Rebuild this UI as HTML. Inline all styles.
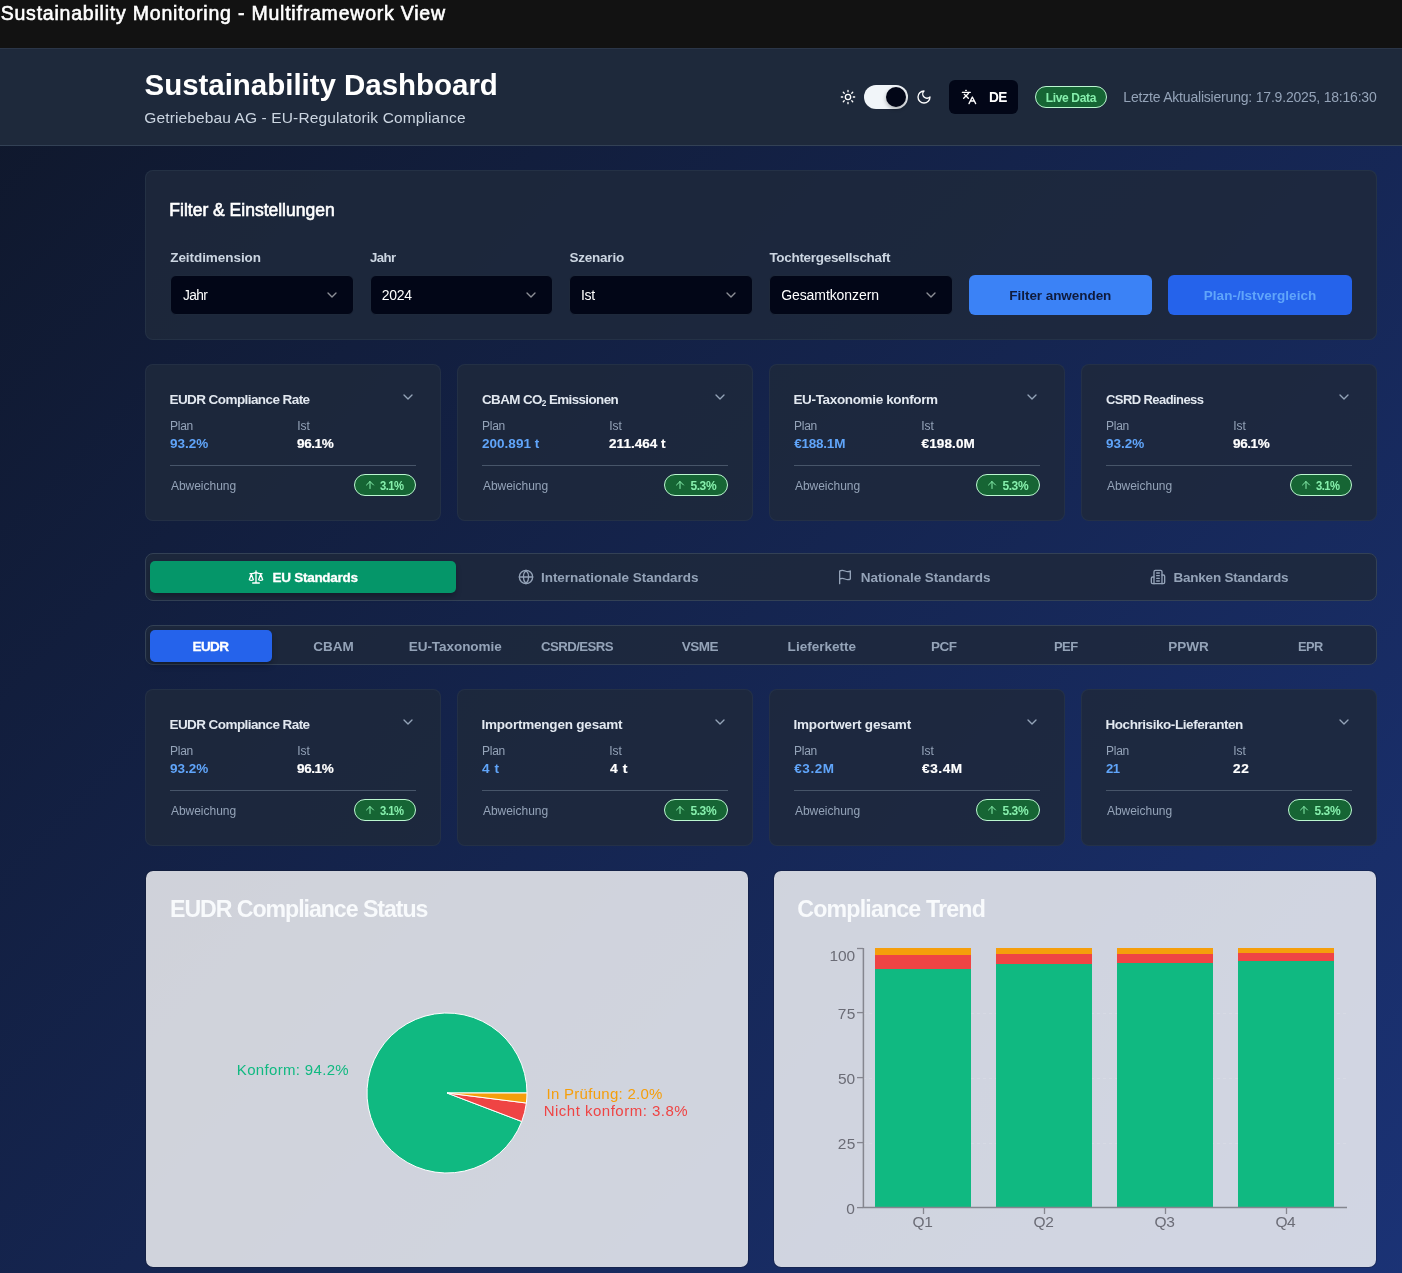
<!DOCTYPE html>
<html lang="de">
<head>
<meta charset="utf-8">
<title>Sustainability Monitoring - Multiframework View</title>
<style>
*{box-sizing:border-box;margin:0;padding:0}
html,body{width:1402px;height:1273px;overflow:hidden}
body{position:relative;font-family:"Liberation Sans",sans-serif;background:#111;color:#fff;-webkit-font-smoothing:antialiased}
.abs{position:absolute}
#txt{position:absolute;left:0;top:0;width:1402px;height:1273px;will-change:transform}
.t{position:absolute;white-space:nowrap;line-height:normal;transform-origin:0 0}
#bg{left:0;top:48px;width:1402px;height:1225px;background:linear-gradient(134deg,#0f172a -0.9%,#1e3a8a 128.1%)}
#topbar{left:0;top:0;width:1402px;height:48px;background:#121212}
#header{left:0;top:48px;width:1402px;height:98px;background:#1e293b;border-top:1px solid #2b3648;border-bottom:1px solid #334155}
.panel{position:absolute;background:rgba(30,41,59,.86);border:1px solid rgba(51,65,85,.4);border-radius:8px}
.sel{position:absolute;background:#020617;border:1px solid #1e293b;border-radius:6px;height:40px;top:275px;width:184px}
.btn{position:absolute;height:40px;top:275px;width:183px;border-radius:6px}
.kpi{position:absolute;width:296px;height:157px;background:rgba(30,41,59,.86);border:1px solid rgba(51,65,85,.35);border-radius:8px}
.badge{position:absolute;height:22px;border-radius:11px;background:#166534;border:1px solid #bbf7d0}
.hr{position:absolute;height:1px;background:#475569}
.chart{position:absolute;width:604px;height:398px;top:870px;background:rgba(255,255,255,.8);background-clip:padding-box;border:1px solid rgba(15,23,42,.3);border-radius:8px}
svg{position:absolute;overflow:visible}
.ic{fill:none;stroke-width:2;stroke-linecap:round;stroke-linejoin:round}
</style>
</head>
<body>
<div id="topbar" class="abs"></div>
<div id="bg" class="abs"></div>
<div id="header" class="abs"></div>
<svg class="ic" viewBox="0 0 24 24" width="16" height="16" style="left:840px;top:89px;stroke:#fff;stroke-width:2"><circle cx="12" cy="12" r="4"/><path d="M12 2v2M12 20v2M4.93 4.93l1.41 1.41M17.66 17.66l1.41 1.41M2 12h2M20 12h2M6.34 17.66l-1.41 1.41M19.07 4.93l-1.41 1.41"/></svg>
<div class="abs" style="left:864px;top:85px;width:44px;height:24px;border-radius:12px;background:#f1f5f9"></div>
<div class="abs" style="left:886px;top:87px;width:20px;height:20px;border-radius:10px;background:#020617;box-shadow:0 2px 4px rgba(0,0,0,.3)"></div>
<svg class="ic" viewBox="0 0 24 24" width="16" height="16" style="left:916px;top:89px;stroke:#fff;stroke-width:2"><path d="M12 3a6 6 0 0 0 9 9 9 9 0 1 1-9-9Z"/></svg>
<div class="abs" style="left:949px;top:80px;width:69px;height:34px;border-radius:6px;background:#020617"></div>
<svg class="ic" viewBox="0 0 24 24" width="16" height="16" style="left:961px;top:89px;stroke:#fff;stroke-width:2"><path d="m5 8 6 6M4 14l6-6 2-3M2 5h12M7 2h1M22 22l-5-10-5 10M14 18h6"/></svg>
<div class="badge" style="left:1035px;top:86px;width:72px"></div>
<div class="panel" style="left:145px;top:170px;width:1232px;height:170px"></div>
<div class="sel" style="left:170.00px;width:183.67px"></div>
<svg class="ic" viewBox="0 0 24 24" width="16" height="16" style="left:323.67px;top:287px;stroke:#fff;stroke-width:2;opacity:0.55"><path d="m6 9 6 6 6-6"/></svg>
<div class="sel" style="left:369.67px;width:183.67px"></div>
<svg class="ic" viewBox="0 0 24 24" width="16" height="16" style="left:523.34px;top:287px;stroke:#fff;stroke-width:2;opacity:0.55"><path d="m6 9 6 6 6-6"/></svg>
<div class="sel" style="left:569.33px;width:183.67px"></div>
<svg class="ic" viewBox="0 0 24 24" width="16" height="16" style="left:723.0px;top:287px;stroke:#fff;stroke-width:2;opacity:0.55"><path d="m6 9 6 6 6-6"/></svg>
<div class="sel" style="left:769.00px;width:183.67px"></div>
<svg class="ic" viewBox="0 0 24 24" width="16" height="16" style="left:922.67px;top:287px;stroke:#fff;stroke-width:2;opacity:0.55"><path d="m6 9 6 6 6-6"/></svg>
<div class="btn" style="left:969px;background:#3b82f6"></div>
<div class="btn" style="left:1168px;width:184px;background:#2563eb"></div>
<div class="kpi" style="left:145px;top:364px"></div>
<svg class="ic" viewBox="0 0 24 24" width="16" height="16" style="left:400px;top:388.5px;stroke:#94a3b8;stroke-width:2"><path d="m6 9 6 6 6-6"/></svg>
<div class="hr" style="left:170px;top:465px;width:246px"></div>
<div class="badge" style="left:354px;top:474px;width:62px"></div>
<svg class="ic" viewBox="0 0 24 24" width="12" height="12" style="left:364px;top:479px;stroke:#86efac;stroke-width:2"><path d="m5 12 7-7 7 7M12 19V5"/></svg>
<div class="kpi" style="left:457px;top:364px"></div>
<svg class="ic" viewBox="0 0 24 24" width="16" height="16" style="left:712px;top:388.5px;stroke:#94a3b8;stroke-width:2"><path d="m6 9 6 6 6-6"/></svg>
<div class="hr" style="left:482px;top:465px;width:246px"></div>
<div class="badge" style="left:664px;top:474px;width:64px"></div>
<svg class="ic" viewBox="0 0 24 24" width="12" height="12" style="left:674px;top:479px;stroke:#86efac;stroke-width:2"><path d="m5 12 7-7 7 7M12 19V5"/></svg>
<div class="kpi" style="left:769px;top:364px"></div>
<svg class="ic" viewBox="0 0 24 24" width="16" height="16" style="left:1024px;top:388.5px;stroke:#94a3b8;stroke-width:2"><path d="m6 9 6 6 6-6"/></svg>
<div class="hr" style="left:794px;top:465px;width:246px"></div>
<div class="badge" style="left:976px;top:474px;width:64px"></div>
<svg class="ic" viewBox="0 0 24 24" width="12" height="12" style="left:986px;top:479px;stroke:#86efac;stroke-width:2"><path d="m5 12 7-7 7 7M12 19V5"/></svg>
<div class="kpi" style="left:1081px;top:364px"></div>
<svg class="ic" viewBox="0 0 24 24" width="16" height="16" style="left:1336px;top:388.5px;stroke:#94a3b8;stroke-width:2"><path d="m6 9 6 6 6-6"/></svg>
<div class="hr" style="left:1106px;top:465px;width:246px"></div>
<div class="badge" style="left:1290px;top:474px;width:62px"></div>
<svg class="ic" viewBox="0 0 24 24" width="12" height="12" style="left:1300px;top:479px;stroke:#86efac;stroke-width:2"><path d="m5 12 7-7 7 7M12 19V5"/></svg>
<div class="kpi" style="left:145px;top:689px"></div>
<svg class="ic" viewBox="0 0 24 24" width="16" height="16" style="left:400px;top:713.5px;stroke:#94a3b8;stroke-width:2"><path d="m6 9 6 6 6-6"/></svg>
<div class="hr" style="left:170px;top:790px;width:246px"></div>
<div class="badge" style="left:354px;top:799px;width:62px"></div>
<svg class="ic" viewBox="0 0 24 24" width="12" height="12" style="left:364px;top:804px;stroke:#86efac;stroke-width:2"><path d="m5 12 7-7 7 7M12 19V5"/></svg>
<div class="kpi" style="left:457px;top:689px"></div>
<svg class="ic" viewBox="0 0 24 24" width="16" height="16" style="left:712px;top:713.5px;stroke:#94a3b8;stroke-width:2"><path d="m6 9 6 6 6-6"/></svg>
<div class="hr" style="left:482px;top:790px;width:246px"></div>
<div class="badge" style="left:664px;top:799px;width:64px"></div>
<svg class="ic" viewBox="0 0 24 24" width="12" height="12" style="left:674px;top:804px;stroke:#86efac;stroke-width:2"><path d="m5 12 7-7 7 7M12 19V5"/></svg>
<div class="kpi" style="left:769px;top:689px"></div>
<svg class="ic" viewBox="0 0 24 24" width="16" height="16" style="left:1024px;top:713.5px;stroke:#94a3b8;stroke-width:2"><path d="m6 9 6 6 6-6"/></svg>
<div class="hr" style="left:794px;top:790px;width:246px"></div>
<div class="badge" style="left:976px;top:799px;width:64px"></div>
<svg class="ic" viewBox="0 0 24 24" width="12" height="12" style="left:986px;top:804px;stroke:#86efac;stroke-width:2"><path d="m5 12 7-7 7 7M12 19V5"/></svg>
<div class="kpi" style="left:1081px;top:689px"></div>
<svg class="ic" viewBox="0 0 24 24" width="16" height="16" style="left:1336px;top:713.5px;stroke:#94a3b8;stroke-width:2"><path d="m6 9 6 6 6-6"/></svg>
<div class="hr" style="left:1106px;top:790px;width:246px"></div>
<div class="badge" style="left:1288px;top:799px;width:64px"></div>
<svg class="ic" viewBox="0 0 24 24" width="12" height="12" style="left:1298px;top:804px;stroke:#86efac;stroke-width:2"><path d="m5 12 7-7 7 7M12 19V5"/></svg>
<div class="panel" style="left:145px;top:553px;width:1232px;height:48px;border-color:#334155"></div>
<div class="abs" style="left:150px;top:561px;width:306px;height:32px;border-radius:5px;background:#059669;box-shadow:0 4px 6px -1px rgba(0,0,0,.3)"></div>
<svg class="ic" viewBox="0 0 24 24" width="16" height="16" style="left:248px;top:569px;stroke:#fff;stroke-width:2"><path d="m16 16 3-8 3 8c-.87.65-1.92 1-3 1s-2.13-.35-3-1Z"/><path d="m2 16 3-8 3 8c-.87.65-1.92 1-3 1s-2.13-.35-3-1Z"/><path d="M7 21h10M12 3v18M3 7h2c2 0 5-1 7-2 2 1 5 2 7 2h2"/></svg>
<svg class="ic" viewBox="0 0 24 24" width="16" height="16" style="left:518px;top:569px;stroke:#94a3b8;stroke-width:2"><circle cx="12" cy="12" r="10"/><path d="M12 2a14.5 14.5 0 0 0 0 20 14.5 14.5 0 0 0 0-20M2 12h20"/></svg>
<svg class="ic" viewBox="0 0 24 24" width="16" height="16" style="left:837px;top:569px;stroke:#94a3b8;stroke-width:2"><path d="M4 15s1-1 4-1 5 2 8 2 4-1 4-1V3s-1 1-4 1-5-2-8-2-4 1-4 1zM4 22v-7"/></svg>
<svg class="ic" viewBox="0 0 24 24" width="16" height="16" style="left:1150px;top:569px;stroke:#94a3b8;stroke-width:2"><path d="M6 22V4a2 2 0 0 1 2-2h8a2 2 0 0 1 2 2v18Z"/><path d="M6 12H4a2 2 0 0 0-2 2v6a2 2 0 0 0 2 2h2M18 9h2a2 2 0 0 1 2 2v9a2 2 0 0 1-2 2h-2M10 6h4M10 10h4M10 14h4M10 18h4"/></svg>
<div class="panel" style="left:145px;top:625px;width:1232px;height:40px;border-color:#334155"></div>
<div class="abs" style="left:150px;top:630px;width:122.2px;height:32px;border-radius:5px;background:#2563eb;box-shadow:0 4px 6px -1px rgba(0,0,0,.3)"></div>
<div class="chart" style="left:145px"></div>
<div class="chart" style="left:773px"></div>
<svg width="1402" height="1273" style="left:0;top:0" viewBox="0 0 1402 1273"><path d="M447,1093L527.00,1093.00A80,80 0 1 0 521.75,1121.51Z" fill="#10b981" stroke="#fff" stroke-width="1"/><path d="M447,1093L521.75,1121.51A80,80 0 0 0 526.37,1103.03Z" fill="#ef4444" stroke="#fff" stroke-width="1"/><path d="M447,1093L526.37,1103.03A80,80 0 0 0 527.00,1093.00Z" fill="#f59e0b" stroke="#fff" stroke-width="1"/></svg>
<svg width="1402" height="1273" style="left:0;top:0" viewBox="0 0 1402 1273" shape-rendering="crispEdges"><line x1="863" x2="1347" y1="1143.0" y2="1143.0" stroke="rgba(255,255,255,.13)" stroke-dasharray="3 3"/><line x1="863" x2="1347" y1="1078.0" y2="1078.0" stroke="rgba(255,255,255,.13)" stroke-dasharray="3 3"/><line x1="863" x2="1347" y1="1013.0" y2="1013.0" stroke="rgba(255,255,255,.13)" stroke-dasharray="3 3"/><rect x="875.0" y="968.5" width="96" height="239.5" fill="#10b981"/><rect x="875.0" y="955.0" width="96" height="13.5" fill="#ef4444"/><rect x="875.0" y="948" width="96" height="7.0" fill="#f59e0b"/><rect x="996.0" y="964.1" width="96" height="243.9" fill="#10b981"/><rect x="996.0" y="954.0" width="96" height="10.1" fill="#ef4444"/><rect x="996.0" y="948" width="96" height="6.0" fill="#f59e0b"/><rect x="1117.0" y="963.1" width="96" height="244.9" fill="#10b981"/><rect x="1117.0" y="954.0" width="96" height="9.1" fill="#ef4444"/><rect x="1117.0" y="948" width="96" height="6.0" fill="#f59e0b"/><rect x="1238.0" y="960.7" width="96" height="247.3" fill="#10b981"/><rect x="1238.0" y="952.9" width="96" height="7.8" fill="#ef4444"/><rect x="1238.0" y="948" width="96" height="4.9" fill="#f59e0b"/></svg>
<svg width="1402" height="1273" style="left:0;top:0" viewBox="0 0 1402 1273"><line x1="863.4" x2="863.4" y1="948" y2="1208" stroke="#85868f" stroke-width="1.5"/><line x1="862.7" x2="1347" y1="1207.6" y2="1207.6" stroke="#85868f" stroke-width="1.5"/><line x1="857" x2="863" y1="1207.6" y2="1207.6" stroke="#85868f" stroke-width="1.3"/><line x1="857" x2="863" y1="1142.6" y2="1142.6" stroke="#85868f" stroke-width="1.3"/><line x1="857" x2="863" y1="1077.6" y2="1077.6" stroke="#85868f" stroke-width="1.3"/><line x1="857" x2="863" y1="1012.6" y2="1012.6" stroke="#85868f" stroke-width="1.3"/><line x1="857" x2="863" y1="948.5" y2="948.5" stroke="#85868f" stroke-width="1.3"/><line x1="923.5" x2="923.5" y1="1208" y2="1214" stroke="#85868f" stroke-width="1.3"/><line x1="1044.5" x2="1044.5" y1="1208" y2="1214" stroke="#85868f" stroke-width="1.3"/><line x1="1165.5" x2="1165.5" y1="1208" y2="1214" stroke="#85868f" stroke-width="1.3"/><line x1="1286.5" x2="1286.5" y1="1208" y2="1214" stroke="#85868f" stroke-width="1.3"/></svg>
<div id="txt">
<div class="t" id="t0" style="top:2px;font-size:19.5px;color:#fff;-webkit-text-stroke:0.6px #fff;letter-spacing:0.786px;left:0.69px;">Sustainability Monitoring - Multiframework View</div>
<div class="t" id="t1" style="top:68px;font-size:29.5px;color:#fff;font-weight:700;letter-spacing:-0.032px;left:144.54px;">Sustainability Dashboard</div>
<div class="t" id="t2" style="top:109px;font-size:15.5px;color:#cbd5e1;letter-spacing:0.126px;left:144.27px;">Getriebebau AG - EU-Regulatorik Compliance</div>
<div class="t" id="t3" style="top:89px;font-size:14px;color:#fff;font-weight:700;letter-spacing:-0.630px;transform:scaleX(0.9728);left:988.55px;">DE</div>
<div class="t" id="t4" style="top:91px;font-size:12px;color:#86efac;font-weight:700;letter-spacing:-0.336px;left:1045.65px;">Live Data</div>
<div class="t" id="t5" style="top:89px;font-size:14px;color:#94a3b8;letter-spacing:-0.197px;left:1123.31px;">Letzte Aktualisierung: 17.9.2025, 18:16:30</div>
<div class="t" id="t6" style="top:200px;font-size:17.5px;color:#fff;-webkit-text-stroke:0.6px #fff;letter-spacing:-0.001px;left:169.33px;">Filter &amp; Einstellungen</div>
<div class="t" id="t7" style="top:250px;font-size:13.5px;color:#cbd5e1;font-weight:700;letter-spacing:-0.054px;left:170.19px;">Zeitdimension</div>
<div class="t" id="t8" style="top:287px;font-size:14px;color:#fff;letter-spacing:-0.630px;transform:scaleX(0.9818);left:182.59px;">Jahr</div>
<div class="t" id="t9" style="top:250px;font-size:13.5px;color:#cbd5e1;font-weight:700;letter-spacing:-0.607px;transform:scaleX(0.9805);left:370.07px;">Jahr</div>
<div class="t" id="t10" style="top:287px;font-size:14px;color:#fff;letter-spacing:-0.284px;left:381.81px;">2024</div>
<div class="t" id="t11" style="top:250px;font-size:13.5px;color:#cbd5e1;font-weight:700;letter-spacing:-0.233px;left:569.52px;">Szenario</div>
<div class="t" id="t12" style="top:287px;font-size:14px;color:#fff;letter-spacing:-0.368px;left:581.04px;">Ist</div>
<div class="t" id="t13" style="top:250px;font-size:13.5px;color:#cbd5e1;font-weight:700;letter-spacing:-0.304px;left:769.40px;">Tochtergesellschaft</div>
<div class="t" id="t14" style="top:287px;font-size:14px;color:#fff;letter-spacing:-0.074px;left:781.14px;">Gesamtkonzern</div>
<div class="t" id="t15" style="top:288px;font-size:13.5px;color:#0f1b3d;font-weight:700;letter-spacing:-0.056px;left:1009.36px;">Filter anwenden</div>
<div class="t" id="t16" style="top:288px;font-size:13.5px;color:#60a5fa;font-weight:700;letter-spacing:0.041px;left:1203.76px;">Plan-/Istvergleich</div>
<div class="t" id="t17" style="top:392px;font-size:13.5px;color:#e2e8f0;font-weight:700;letter-spacing:-0.572px;left:169.46px;">EUDR Compliance Rate</div>
<div class="t" id="t18" style="top:419px;font-size:12px;color:#94a3b8;letter-spacing:-0.273px;left:170.06px;">Plan</div>
<div class="t" id="t19" style="top:419px;font-size:12px;color:#94a3b8;letter-spacing:0.012px;left:297.16px;">Ist</div>
<div class="t" id="t20" style="top:436px;font-size:13.5px;color:#60a5fa;font-weight:700;letter-spacing:0.033px;left:169.88px;">93.2%</div>
<div class="t" id="t21" style="top:436px;font-size:13.5px;color:#fff;font-weight:700;-webkit-text-stroke:0.2px #fff;letter-spacing:-0.417px;left:297.08px;">96.1%</div>
<div class="t" id="t22" style="top:479px;font-size:12px;color:#94a3b8;letter-spacing:-0.013px;left:170.90px;">Abweichung</div>
<div class="t" id="t23" style="top:479px;font-size:12px;color:#86efac;font-weight:700;letter-spacing:-0.540px;transform:scaleX(0.9377);left:380.42px;">3.1%</div>
<div class="t" id="t24" style="top:392px;font-size:13.5px;color:#e2e8f0;font-weight:700;letter-spacing:-0.607px;transform:scaleX(0.9921);left:481.88px;">CBAM CO<span style="font-size:.62em;position:relative;top:.28em">2</span> Emissionen</div>
<div class="t" id="t25" style="top:419px;font-size:12px;color:#94a3b8;letter-spacing:-0.273px;left:482.06px;">Plan</div>
<div class="t" id="t26" style="top:419px;font-size:12px;color:#94a3b8;letter-spacing:0.012px;left:609.16px;">Ist</div>
<div class="t" id="t27" style="top:436px;font-size:13.5px;color:#60a5fa;font-weight:700;letter-spacing:0.055px;left:481.88px;">200.891 t</div>
<div class="t" id="t28" style="top:436px;font-size:13.5px;color:#fff;font-weight:700;-webkit-text-stroke:0.2px #fff;letter-spacing:0.022px;left:609.08px;">211.464 t</div>
<div class="t" id="t29" style="top:479px;font-size:12px;color:#94a3b8;letter-spacing:-0.013px;left:482.90px;">Abweichung</div>
<div class="t" id="t30" style="top:479px;font-size:12px;color:#86efac;font-weight:700;letter-spacing:-0.401px;left:690.41px;">5.3%</div>
<div class="t" id="t31" style="top:392px;font-size:13.5px;color:#e2e8f0;font-weight:700;letter-spacing:-0.347px;left:793.46px;">EU-Taxonomie konform</div>
<div class="t" id="t32" style="top:419px;font-size:12px;color:#94a3b8;letter-spacing:-0.273px;left:794.06px;">Plan</div>
<div class="t" id="t33" style="top:419px;font-size:12px;color:#94a3b8;letter-spacing:0.012px;left:921.16px;">Ist</div>
<div class="t" id="t34" style="top:436px;font-size:13.5px;color:#60a5fa;font-weight:700;letter-spacing:-0.241px;left:794.30px;">€188.1M</div>
<div class="t" id="t35" style="top:436px;font-size:13.5px;color:#fff;font-weight:700;-webkit-text-stroke:0.2px #fff;letter-spacing:0.125px;left:921.50px;">€198.0M</div>
<div class="t" id="t36" style="top:479px;font-size:12px;color:#94a3b8;letter-spacing:-0.013px;left:794.90px;">Abweichung</div>
<div class="t" id="t37" style="top:479px;font-size:12px;color:#86efac;font-weight:700;letter-spacing:-0.401px;left:1002.41px;">5.3%</div>
<div class="t" id="t38" style="top:392px;font-size:13.5px;color:#e2e8f0;font-weight:700;letter-spacing:-0.607px;transform:scaleX(0.9634);left:1105.89px;">CSRD Readiness</div>
<div class="t" id="t39" style="top:419px;font-size:12px;color:#94a3b8;letter-spacing:-0.273px;left:1106.06px;">Plan</div>
<div class="t" id="t40" style="top:419px;font-size:12px;color:#94a3b8;letter-spacing:0.012px;left:1233.16px;">Ist</div>
<div class="t" id="t41" style="top:436px;font-size:13.5px;color:#60a5fa;font-weight:700;letter-spacing:0.033px;left:1105.88px;">93.2%</div>
<div class="t" id="t42" style="top:436px;font-size:13.5px;color:#fff;font-weight:700;-webkit-text-stroke:0.2px #fff;letter-spacing:-0.417px;left:1233.08px;">96.1%</div>
<div class="t" id="t43" style="top:479px;font-size:12px;color:#94a3b8;letter-spacing:-0.013px;left:1106.90px;">Abweichung</div>
<div class="t" id="t44" style="top:479px;font-size:12px;color:#86efac;font-weight:700;letter-spacing:-0.540px;transform:scaleX(0.9377);left:1316.42px;">3.1%</div>
<div class="t" id="t45" style="top:717px;font-size:13.5px;color:#e2e8f0;font-weight:700;letter-spacing:-0.572px;left:169.46px;">EUDR Compliance Rate</div>
<div class="t" id="t46" style="top:744px;font-size:12px;color:#94a3b8;letter-spacing:-0.273px;left:170.06px;">Plan</div>
<div class="t" id="t47" style="top:744px;font-size:12px;color:#94a3b8;letter-spacing:0.012px;left:297.16px;">Ist</div>
<div class="t" id="t48" style="top:761px;font-size:13.5px;color:#60a5fa;font-weight:700;letter-spacing:0.033px;left:169.88px;">93.2%</div>
<div class="t" id="t49" style="top:761px;font-size:13.5px;color:#fff;font-weight:700;-webkit-text-stroke:0.2px #fff;letter-spacing:-0.417px;left:297.08px;">96.1%</div>
<div class="t" id="t50" style="top:804px;font-size:12px;color:#94a3b8;letter-spacing:-0.013px;left:170.90px;">Abweichung</div>
<div class="t" id="t51" style="top:804px;font-size:12px;color:#86efac;font-weight:700;letter-spacing:-0.540px;transform:scaleX(0.9377);left:380.42px;">3.1%</div>
<div class="t" id="t52" style="top:717px;font-size:13.5px;color:#e2e8f0;font-weight:700;letter-spacing:-0.204px;left:481.46px;">Importmengen gesamt</div>
<div class="t" id="t53" style="top:744px;font-size:12px;color:#94a3b8;letter-spacing:-0.273px;left:482.06px;">Plan</div>
<div class="t" id="t54" style="top:744px;font-size:12px;color:#94a3b8;letter-spacing:0.012px;left:609.16px;">Ist</div>
<div class="t" id="t55" style="top:761px;font-size:13.5px;color:#60a5fa;font-weight:700;letter-spacing:0.607px;transform:scaleX(1.0050);left:482.30px;">4 t</div>
<div class="t" id="t56" style="top:761px;font-size:13.5px;color:#fff;font-weight:700;-webkit-text-stroke:0.2px #fff;letter-spacing:0.607px;transform:scaleX(1.0228);left:609.50px;">4 t</div>
<div class="t" id="t57" style="top:804px;font-size:12px;color:#94a3b8;letter-spacing:-0.013px;left:482.90px;">Abweichung</div>
<div class="t" id="t58" style="top:804px;font-size:12px;color:#86efac;font-weight:700;letter-spacing:-0.401px;left:690.41px;">5.3%</div>
<div class="t" id="t59" style="top:717px;font-size:13.5px;color:#e2e8f0;font-weight:700;letter-spacing:-0.192px;left:793.46px;">Importwert gesamt</div>
<div class="t" id="t60" style="top:744px;font-size:12px;color:#94a3b8;letter-spacing:-0.273px;left:794.06px;">Plan</div>
<div class="t" id="t61" style="top:744px;font-size:12px;color:#94a3b8;letter-spacing:0.012px;left:921.16px;">Ist</div>
<div class="t" id="t62" style="top:761px;font-size:13.5px;color:#60a5fa;font-weight:700;letter-spacing:0.542px;left:794.30px;">€3.2M</div>
<div class="t" id="t63" style="top:761px;font-size:13.5px;color:#fff;font-weight:700;-webkit-text-stroke:0.2px #fff;letter-spacing:0.607px;transform:scaleX(1.0035);left:921.50px;">€3.4M</div>
<div class="t" id="t64" style="top:804px;font-size:12px;color:#94a3b8;letter-spacing:-0.013px;left:794.90px;">Abweichung</div>
<div class="t" id="t65" style="top:804px;font-size:12px;color:#86efac;font-weight:700;letter-spacing:-0.401px;left:1002.41px;">5.3%</div>
<div class="t" id="t66" style="top:717px;font-size:13.5px;color:#e2e8f0;font-weight:700;letter-spacing:-0.435px;left:1105.46px;">Hochrisiko-Lieferanten</div>
<div class="t" id="t67" style="top:744px;font-size:12px;color:#94a3b8;letter-spacing:-0.273px;left:1106.06px;">Plan</div>
<div class="t" id="t68" style="top:744px;font-size:12px;color:#94a3b8;letter-spacing:0.012px;left:1233.16px;">Ist</div>
<div class="t" id="t69" style="top:761px;font-size:13.5px;color:#60a5fa;font-weight:700;letter-spacing:-0.607px;transform:scaleX(0.9732);left:1105.89px;">21</div>
<div class="t" id="t70" style="top:761px;font-size:13.5px;color:#fff;font-weight:700;-webkit-text-stroke:0.2px #fff;letter-spacing:0.607px;transform:scaleX(1.0080);left:1233.07px;">22</div>
<div class="t" id="t71" style="top:804px;font-size:12px;color:#94a3b8;letter-spacing:-0.013px;left:1106.90px;">Abweichung</div>
<div class="t" id="t72" style="top:804px;font-size:12px;color:#86efac;font-weight:700;letter-spacing:-0.401px;left:1314.41px;">5.3%</div>
<div class="t" id="t73" style="top:570px;font-size:13.5px;color:#fff;font-weight:700;-webkit-text-stroke:0.3px #fff;letter-spacing:-0.285px;left:272.61px;">EU Standards</div>
<div class="t" id="t74" style="top:570px;font-size:13.5px;color:#94a3b8;font-weight:700;letter-spacing:-0.031px;left:540.96px;">Internationale Standards</div>
<div class="t" id="t75" style="top:570px;font-size:13.5px;color:#94a3b8;font-weight:700;letter-spacing:-0.052px;left:860.86px;">Nationale Standards</div>
<div class="t" id="t76" style="top:570px;font-size:13.5px;color:#94a3b8;font-weight:700;letter-spacing:-0.237px;left:1173.56px;">Banken Standards</div>
<div class="t" id="t77" style="top:639px;font-size:13.5px;color:#fff;font-weight:700;-webkit-text-stroke:0.3px #fff;letter-spacing:-0.588px;left:192.56px;">EUDR</div>
<div class="t" id="t78" style="top:639px;font-size:13.5px;color:#94a3b8;font-weight:700;letter-spacing:-0.026px;left:313.23px;">CBAM</div>
<div class="t" id="t79" style="top:639px;font-size:13.5px;color:#94a3b8;font-weight:700;letter-spacing:-0.058px;left:408.81px;">EU-Taxonomie</div>
<div class="t" id="t80" style="top:639px;font-size:13.5px;color:#94a3b8;font-weight:700;letter-spacing:-0.607px;transform:scaleX(0.9805);left:541.44px;">CSRD/ESRS</div>
<div class="t" id="t81" style="top:639px;font-size:13.5px;color:#94a3b8;font-weight:700;letter-spacing:-0.470px;left:681.65px;">VSME</div>
<div class="t" id="t82" style="top:639px;font-size:13.5px;color:#94a3b8;font-weight:700;letter-spacing:0.020px;left:787.61px;">Lieferkette</div>
<div class="t" id="t83" style="top:639px;font-size:13.5px;color:#94a3b8;font-weight:700;letter-spacing:-0.507px;left:931.11px;">PCF</div>
<div class="t" id="t84" style="top:639px;font-size:13.5px;color:#94a3b8;font-weight:700;letter-spacing:-0.607px;transform:scaleX(0.9636);left:1054.24px;">PEF</div>
<div class="t" id="t85" style="top:639px;font-size:13.5px;color:#94a3b8;font-weight:700;left:1168.16px;">PPWR</div>
<div class="t" id="t86" style="top:639px;font-size:13.5px;color:#94a3b8;font-weight:700;letter-spacing:-0.607px;transform:scaleX(0.9509);left:1298.00px;">EPR</div>
<div class="t" id="t87" style="top:896px;font-size:23.2px;color:#f8fafc;font-weight:700;letter-spacing:-1.044px;transform:scaleX(0.9978);left:169.55px;">EUDR Compliance Status</div>
<div class="t" id="t88" style="top:896px;font-size:23.2px;color:#f8fafc;font-weight:700;letter-spacing:-0.826px;left:797.27px;">Compliance Trend</div>
<div class="t" id="t89" style="top:1061px;font-size:15px;color:#10b981;letter-spacing:0.327px;left:236.83px;">Konform: 94.2%</div>
<div class="t" id="t90" style="top:1085px;font-size:15px;color:#f59e0b;letter-spacing:0.278px;left:546.53px;">In Prüfung: 2.0%</div>
<div class="t" id="t91" style="top:1102px;font-size:15px;color:#ef4444;letter-spacing:0.492px;left:543.73px;">Nicht konform: 3.8%</div>
<div class="t" id="t92" style="top:1200px;font-size:15.5px;color:#6b6c76;letter-spacing:0.295px;left:846.17px;">0</div>
<div class="t" id="t93" style="top:1135px;font-size:15.5px;color:#6b6c76;letter-spacing:0.205px;left:837.87px;">25</div>
<div class="t" id="t94" style="top:1070px;font-size:15.5px;color:#6b6c76;letter-spacing:-0.280px;left:838.12px;">50</div>
<div class="t" id="t95" style="top:1005px;font-size:15.5px;color:#6b6c76;letter-spacing:0.205px;left:837.87px;">75</div>
<div class="t" id="t96" style="top:947px;font-size:15.5px;color:#6b6c76;letter-spacing:-0.185px;left:829.58px;">100</div>
<div class="t" id="t97" style="top:1213px;font-size:15.5px;color:#6b6c76;letter-spacing:-0.333px;left:912.47px;">Q1</div>
<div class="t" id="t98" style="top:1213px;font-size:15.5px;color:#6b6c76;letter-spacing:-0.333px;left:1033.47px;">Q2</div>
<div class="t" id="t99" style="top:1213px;font-size:15.5px;color:#6b6c76;letter-spacing:-0.333px;left:1154.47px;">Q3</div>
<div class="t" id="t100" style="top:1213px;font-size:15.5px;color:#6b6c76;letter-spacing:-0.575px;left:1275.47px;">Q4</div>
</div>
</body>
</html>
